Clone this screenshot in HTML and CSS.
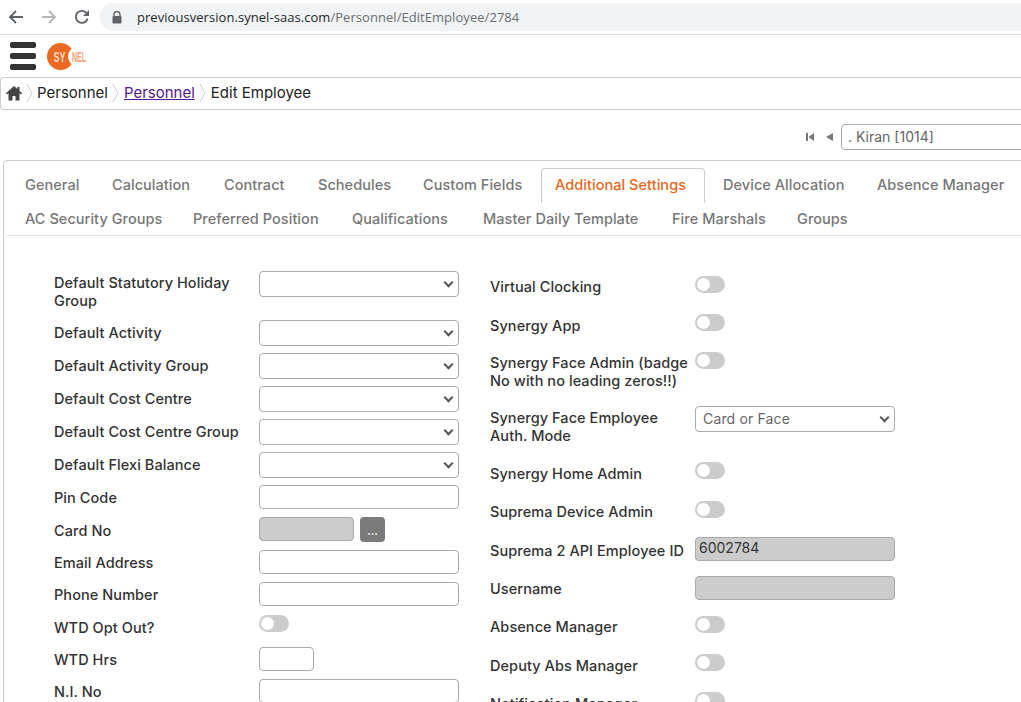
FILE: index.html
```html
<!DOCTYPE html>
<html lang="en">
<head>
  <meta charset="UTF-8">
  <meta name="viewport" content="width=device-width, initial-scale=1">
  <title>Edit Employee</title>
  <link rel="stylesheet" href="styles.css">
</head>
<body>
  <div class="browser-bar">
    <svg class="nav-icon" width="16" height="16" viewBox="0 0 16 16"><path d="M15 8H2.5M8 2L2 8l6 6" fill="none" stroke="#5f6368" stroke-width="1.9"/></svg>
    <svg class="nav-icon" width="16" height="16" viewBox="0 0 16 16"><path d="M1 8h12.5M8 2l6 6-6 6" fill="none" stroke="#b4b6b9" stroke-width="1.9"/></svg>
    <svg class="nav-icon" width="16" height="16" viewBox="0 0 16 16"><path d="M13.6 9.6A6 6 0 1 1 12.3 3.8" fill="none" stroke="#5f6368" stroke-width="1.9"/><path d="M15 1v6H9z" fill="#5f6368"/></svg>
    <div class="omnibox">
      <svg width="10" height="13" viewBox="0 0 10 13"><path d="M2 5V3.600a3 3 0 0 1 6 0V5" fill="none" stroke="#5f6368" stroke-width="1.300"/><rect x="0.500" y="5" width="9" height="7.500" rx="1" fill="#5f6368"/></svg>
      <span class="url"><b>previousversion.synel-saas.com</b>/Personnel/EditEmployee/2784</span>
    </div>
  </div>

  <div class="topbar">
    <div class="burger"><i></i><i></i><i></i></div>
    <svg class="logo" width="44" height="30" viewBox="0 0 44 30">
      <circle cx="14.500" cy="15.500" r="13.500" fill="#ea6a24"/>
      <circle cx="32" cy="15.500" r="10" fill="#fff"/>
      <text x="7.500" y="21" class="logo-sy" textLength="12" lengthAdjust="spacingAndGlyphs">SY</text>
      <text x="26" y="21" class="logo-nel" textLength="14" lengthAdjust="spacingAndGlyphs">NEL</text>
    </svg>
  </div>

  <div class="breadcrumb">
    <svg class="home" width="16" height="16" viewBox="0 0 16 16"><path d="M8 1L0 8.200l1 1.200 1.500-1.300V15.500h4v-4.500h3v4.500h4V8.100L15 9.400l1-1.200-2.500-2.300V2h-2.200v1.900z" fill="#444"/></svg>
    <svg class="crumb-sep first" width="8" height="20" viewBox="0 0 8 20"><path d="M1 1l5 9-5 9" fill="none" stroke="#ccc"/></svg>
    <span>Personnel</span>
    <svg class="crumb-sep" width="8" height="20" viewBox="0 0 8 20"><path d="M1 1l5 9-5 9" fill="none" stroke="#ccc"/></svg>
    <a href="#">Personnel</a>
    <svg class="crumb-sep" width="8" height="20" viewBox="0 0 8 20"><path d="M1 1l5 9-5 9" fill="none" stroke="#ccc"/></svg>
    <span>Edit Employee</span>
  </div>

  <div class="pager">
    <svg width="8" height="8" viewBox="0 0 8 8"><path d="M0 0h2v8H0zM8 0v8L2.500 4z" fill="#777"/></svg>
    <svg width="7" height="8" viewBox="0 0 7 8"><path d="M7 0v8L0 4z" fill="#777"/></svg>
    <div class="pager-input">. Kiran [1014]</div>
  </div>

  <div class="panel">
    <div class="tabs">
      <div class="tab-row first">
        <a class="tab" href="#">General</a>
        <a class="tab" href="#">Calculation</a>
        <a class="tab" href="#">Contract</a>
        <a class="tab" href="#">Schedules</a>
        <a class="tab" href="#">Custom Fields</a>
        <a class="tab active" href="#">Additional Settings</a>
        <a class="tab" href="#">Device Allocation</a>
        <a class="tab" href="#">Absence Manager</a>
      </div>
      <div class="tab-row second">
        <a class="tab" href="#">AC Security Groups</a>
        <a class="tab" href="#">Preferred Position</a>
        <a class="tab" href="#">Qualifications</a>
        <a class="tab" href="#">Master Daily Template</a>
        <a class="tab" href="#">Fire Marshals</a>
        <a class="tab" href="#">Groups</a>
      </div>
    </div>

    <div class="form">
      <div class="col col-left">
        <div class="row h49"><label class="pad3">Default Statutory Holiday Group</label><div class="select"></div></div>
        <div class="row h33"><label>Default Activity</label><div class="select"></div></div>
        <div class="row h33"><label>Default Activity Group</label><div class="select"></div></div>
        <div class="row h33"><label>Default Cost Centre</label><div class="select"></div></div>
        <div class="row h33"><label>Default Cost Centre Group</label><div class="select"></div></div>
        <div class="row h33"><label>Default Flexi Balance</label><div class="select"></div></div>
        <div class="row h32"><label>Pin Code</label><div class="input"></div></div>
        <div class="row h33"><label class="pad5">Card No</label><div class="input short off"></div><div class="dots">...</div></div>
        <div class="row h32"><label>Email Address</label><div class="input"></div></div>
        <div class="row h33"><label>Phone Number</label><div class="input"></div></div>
        <div class="row h32"><label>WTD Opt Out?</label><div class="toggle"></div></div>
        <div class="row h32"><label>WTD Hrs</label><div class="input tiny"></div></div>
        <div class="row h33"><label>N.I. No</label><div class="input"></div></div>
      </div>

      <div class="col col-right">
        <div class="row h38"><label class="pad2">Virtual Clocking</label><div class="toggle"></div></div>
        <div class="row h38"><label class="pad3">Synergy App</label><div class="toggle"></div></div>
        <div class="row h54"><label class="pad2">Synergy Face Admin (badge No with no leading zeros!!)</label><div class="toggle"></div></div>
        <div class="row h56"><label class="pad3">Synergy Face Employee Auth. Mode</label><div class="select filled">Card or Face</div></div>
        <div class="row h39"><label class="pad3">Synergy Home Admin</label><div class="toggle"></div></div>
        <div class="row h36"><label class="pad2">Suprema Device Admin</label><div class="toggle"></div></div>
        <div class="row h39"><label class="pad5">Suprema 2 API Employee ID</label><div class="input off wide-text">6002784</div></div>
        <div class="row h40"><label class="pad4">Username</label><div class="input off"></div></div>
        <div class="row h38"><label class="pad2">Absence Manager</label><div class="toggle"></div></div>
        <div class="row h38"><label class="pad3">Deputy Abs Manager</label><div class="toggle"></div></div>
        <div class="row h38"><label class="pad3">Notification Manager</label><div class="toggle"></div></div>
      </div>
    </div>
  </div>
</body>
</html>
```

FILE: styles.css
```css
html, body {
  margin: 0;
  height: 702px;
  overflow: hidden;
  background: #fff;
}

body {
  font-family: Inter, "Open Sans", sans-serif;
  font-size: 14px;
  color: #333;
}

/* browser chrome */
.browser-bar {
  display: flex;
  align-items: center;
  height: 34px;
  padding-left: 8px;
  border-bottom: 1px solid #dcdcdc;
}

.nav-icon {
  margin-right: 17px;
}

.omnibox {
  display: flex;
  align-items: center;
  flex: 1;
  height: 28px;
  margin-left: -7px;
  padding-left: 12px;
  background: #f1f3f4;
  border-radius: 14px 0 0 14px;
}

.url {
  margin-left: 15px;
  font-family: "Open Sans", sans-serif;
  font-size: 13px;
  letter-spacing: 0.05px;
  color: #6b6f73;
}

.url b {
  font-weight: 400;
  color: #24272b;
}

/* top nav */
.topbar {
  display: flex;
  align-items: center;
  height: 42px;
  padding-left: 10px;
}

.burger {
  display: flex;
  flex-direction: column;
  gap: 5px;
  width: 26px;
}

.burger i {
  display: block;
  height: 6px;
  background: #333;
  border-radius: 2px;
}

.logo {
  margin-left: 10px;
  overflow: visible;
}

.logo-sy, .logo-nel {
  font-family: "Liberation Sans", sans-serif;
  font-size: 15px;
  font-weight: 700;
}

.logo-sy {
  fill: #fbd9c4;
}

.logo-nel {
  fill: #f0a27a;
}

.breadcrumb {
  display: flex;
  align-items: center;
  height: 29px;
  padding: 0 0 2px 5px;
  border: 1px solid #ccc;
  border-right: none;
  border-radius: 4px 0 0 4px;
  font-size: 15px;
  color: #222;
}

.breadcrumb a {
  color: #551a8b;
}

.crumb-sep {
  flex: none;
  margin: 0 4px;
}

.crumb-sep.first {
  margin-right: 3px;
}

.home {
  flex: none;
}

.pager {
  display: flex;
  align-items: center;
  height: 26px;
  margin: 14px 0 10px 806px;
}

.pager svg {
  flex: none;
  margin-right: 12px;
}

.pager svg + svg {
  margin-right: 8px;
}

.pager-input {
  flex: none;
  width: 200px;
  height: 24px;
  padding-left: 6px;
  border: 1px solid #a9a9a9;
  border-radius: 4px;
  line-height: 24px;
  color: #666;
}

/* tabbed panel */
.panel {
  width: 1100px;
  margin-left: 3px;
  padding: 7px 0 0 3px;
  border: 1px solid #ccc;
  border-radius: 4px;
}

.tabs {
  border-bottom: 1px solid #ddd;
}

.tab-row {
  display: grid;
  height: 34px;
  padding-left: 4px;
}

.tab-row.first {
  grid-template-columns: 87px 112px 94px 105px 132px 168px 154px auto;
}

.tab-row.second {
  grid-template-columns: 168px 159px 131px 189px 125px auto;
  height: 33px;
}

.tab {
  display: block;
  height: 34px;
  margin-right: 4px;
  padding: 0 0 0 13px;
  border: 1px solid transparent;
  border-bottom: none;
  border-radius: 4px 4px 0 0;
  font-size: 14.5px;
  line-height: 32px;
  font-weight: 500;
  letter-spacing: 0.05px;
  color: #777;
  text-decoration: none;
  white-space: nowrap;
}

.tab.active {
  border-color: #ccc;
  color: #e8671b;
  background: #fff;
}

/* form */
.form {
  display: flex;
  padding: 35px 0 0 47px;
}

.col-left {
  width: 436px;
}

.col-right {
  width: 405px;
  padding-top: 5px;
}

.row {
  display: flex;
  align-items: flex-start;
}

.h32 { height: 32px; }
.h33 { height: 33px; }
.h36 { height: 36px; }
.h38 { height: 38px; }
.h39 { height: 39px; }
.h40 { height: 40px; }
.h49 { height: 49px; }
.h54 { height: 54px; }
.h56 { height: 56px; }

label {
  flex: none;
  width: 205px;
  padding-top: 4px;
  font-size: 14.5px;
  line-height: 18px;
  font-weight: 500;
  letter-spacing: 0.07px;
  color: #333;
}

label.pad2 { padding-top: 2px; }
label.pad3 { padding-top: 3px; }
label.pad4 { padding-top: 4px; }
label.pad5 { padding-top: 5px; }

.select, .input {
  box-sizing: border-box;
  flex: none;
  width: 200px;
  border: 1px solid #a9a9a9;
  border-radius: 4px;
  background: #fff;
}

.select {
  position: relative;
  height: 26px;
  padding-left: 7px;
  line-height: 24px;
  letter-spacing: 0.15px;
  color: #666;
}

.select::after {
  content: "";
  position: absolute;
  right: 6px;
  top: 7px;
  width: 5px;
  height: 5px;
  border-right: 2px solid #555;
  border-bottom: 2px solid #555;
  transform: rotate(45deg);
}

.input {
  height: 24px;
}

.input.short {
  width: 95px;
}

.input.tiny {
  width: 55px;
}

.input.off {
  background: #ccc;
}

.wide-text {
  padding-left: 3px;
  line-height: 20px;
  color: #333;
}

.dots {
  width: 25px;
  height: 25px;
  margin-left: 6px;
  background: #7b7b7b;
  border-radius: 4px;
  color: #fff;
  font-size: 11px;
  font-weight: 700;
  line-height: 29px;
  text-align: center;
}

.toggle {
  position: relative;
  flex: none;
  width: 30px;
  height: 17px;
  background: #ccc;
  border-radius: 9px;
}

.toggle::before {
  content: "";
  position: absolute;
  left: 2px;
  top: 2px;
  width: 13px;
  height: 13px;
  background: #fff;
  border-radius: 50%;
}
```
